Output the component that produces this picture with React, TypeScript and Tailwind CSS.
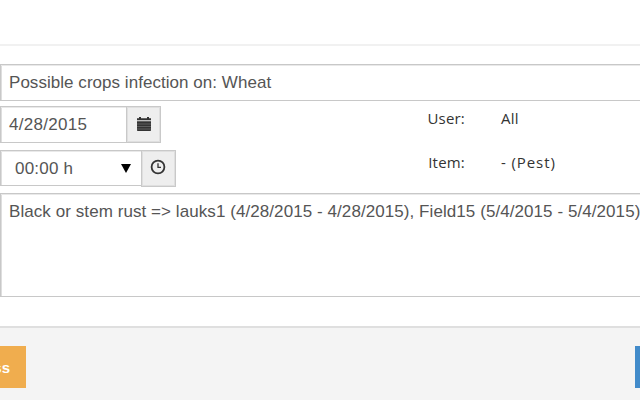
import type { ReactNode } from "react";

const control = "border border-[#c8c8c8] bg-white shadow-[inset_0_1px_0_#e9e9e9,inset_1px_0_0_#dedede]";

function CalendarIcon() {
  return (
    <svg width="16" height="16" viewBox="0 0 16 16" fill="#333">
      <path d="M1 4.3V2.2h2V1h2v1.2h6V1h2v1.2h2v2.1z" />
      <path d="M1 5.3h14v8.9a.8.8 0 0 1-.8.8H1.8a.8.8 0 0 1-.8-.8z" />
      <path d="M1 8h14M1 10.5h14M1 13h14" stroke="#888" strokeWidth=".5" />
    </svg>
  );
}

function ClockIcon() {
  return (
    <svg width="16" height="16" viewBox="0 0 16 16" fill="none" stroke="#333">
      <circle cx="8" cy="8" r="6.4" strokeWidth="1.8" />
      <path d="M8 4.2v4.2h3" strokeWidth="1.3" />
    </svg>
  );
}

function Addon({ children, className }: { children: ReactNode; className: string }) {
  return (
    <span className={`flex justify-center border border-[#c9c9c9] bg-[#eee] shadow-[inset_0_0_0_1px_#dfdfdf] ${className}`}>
      {children}
    </span>
  );
}

function Info({ label, value, valueClass }: { label: string; value: string; valueClass?: string }) {
  return (
    <div className="flex h-11 pt-[2px] font-['Open_Sans','Noto_Sans',sans-serif] text-[15px] leading-5 text-[#333]">
      <span className="w-[65px] text-right tracking-[0.2px]">{label}</span>
      <span className={`ml-9 whitespace-nowrap ${valueClass ?? ""}`}>{value}</span>
    </div>
  );
}

export default function App() {
  return (
    <div className="flex h-[400px] w-[640px] flex-col overflow-hidden bg-white font-['Liberation_Sans',Arial,sans-serif] text-[17px] text-[#555]">
      <div className="h-[46px] shrink-0 border-b-2 border-[#f1f1f1]" />

      <div className="mt-[18px] flex w-[660px] shrink-0 flex-col">
        <div className={`flex h-[37px] items-center pl-2 ${control}`}>
          <span className="whitespace-nowrap tracking-[0.04px]">Possible crops infection on: Wheat</span>
        </div>

        <div className="mt-[5px] flex h-[87px]">
          <div className="w-[400px]">
            <div className="flex">
              <div className={`flex h-[37px] w-[127px] items-center pl-2 tracking-[0.3px] ${control}`}>4/28/2015</div>
              <Addon className="-ml-px h-[37px] w-[35px] pt-[9px]"><CalendarIcon /></Addon>
            </div>
            <div className="mt-[7px] flex">
              <div className={`flex h-[36px] w-[142px] items-center justify-between pl-[14px] pr-[10px] ${control}`}>
                <span className="pt-0.5 tracking-[0.2px]">00:00 h</span>
                <svg width="10" height="9" viewBox="0 0 10 9"><path d="M0 0h10L5 9z" fill="#000" /></svg>
              </div>
              <Addon className="-ml-px h-[37px] w-[35px] pr-px pt-[8px]"><ClockIcon /></Addon>
            </div>
          </div>
          <div>
            <Info label="User:" value="All" valueClass="tracking-[0.3px]" />
            <Info label="Item:" value="- (Pest)" valueClass="tracking-[0.9px]" />
          </div>
        </div>

        <div className={`h-[104px] pl-2 pt-[8px] leading-5 ${control}`}>
          <span className="whitespace-nowrap tracking-[0.07px]">
            Black or stem rust =&gt; lauks1 (4/28/2015 - 4/28/2015), Field15 (5/4/2015 - 5/4/2015)
          </span>
        </div>
      </div>

      <div className="mt-[29px] flex flex-1 items-start justify-between border-t-2 border-[#dfdfdf] bg-[#f4f4f4] pt-[18px]">
        <button className="flex h-[42px] w-[26px] items-center justify-end bg-[#f0ad4e] pr-4 pt-0.5 text-[15px] font-bold text-white">ss</button>
        <button aria-label="Save" className="h-[42px] w-[5px] bg-[#428bca]" />
      </div>
    </div>
  );
}
